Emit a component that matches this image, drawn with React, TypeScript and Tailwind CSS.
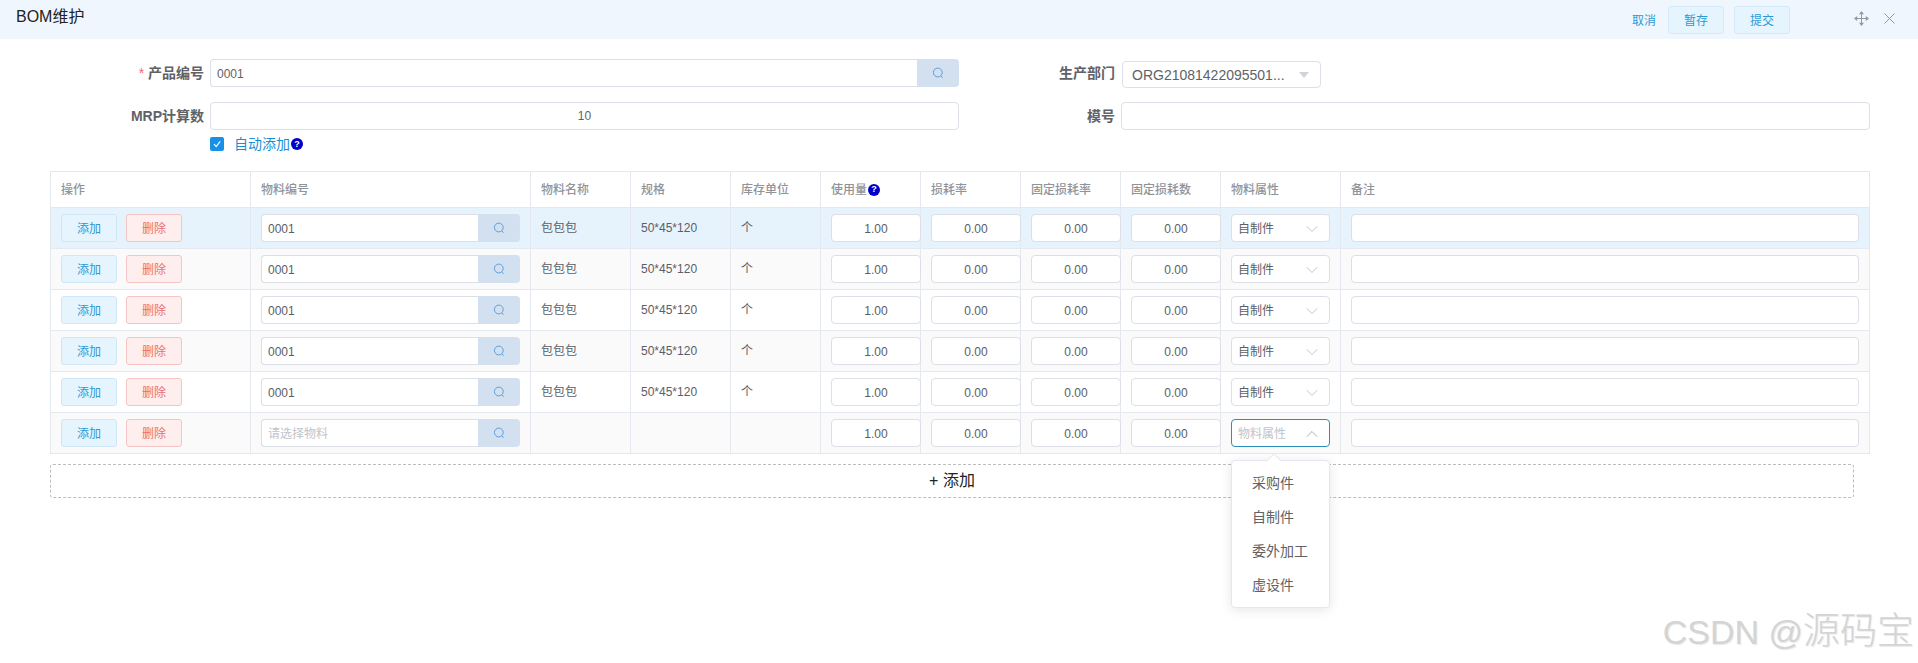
import { ChevronDown, ChevronUp } from "lucide-react";

const FONT = "font-['Liberation_Sans','Noto_Sans_CJK_SC',sans-serif]";

function IconSearch() {
  return (
    <svg width="12" height="12" viewBox="0 0 12 12" fill="none" stroke="#5a9fe0" strokeWidth="1">
      <circle cx="5.8" cy="5.5" r="4.4" />
      <path d="M8.8 8.8 L10.6 10.8" />
    </svg>
  );
}

function IconMove() {
  return (
    <svg width="15" height="15" viewBox="0 0 15 15" fill="#8f98a3" stroke="#8f98a3" strokeWidth="1">
      <path d="M7.5 2 V13 M2 7.5 H13" fill="none" />
      <path d="M7.5 0 L10 3.2 H5 Z M7.5 15 L10 11.8 H5 Z M0 7.5 L3.2 5 V10 Z M15 7.5 L11.8 5 V10 Z" stroke="none" />
    </svg>
  );
}

function IconClose() {
  return (
    <svg width="11" height="11" viewBox="0 0 11 11" fill="none" stroke="#8f98a3" strokeWidth="1">
      <path d="M0.5 0.5 L10.5 10.5 M10.5 0.5 L0.5 10.5" />
    </svg>
  );
}

function Help() {
  return (
    <span className="ml-px inline-flex h-3 w-3 shrink-0 items-center justify-center rounded-full bg-[#0000c8] text-[9px] leading-none font-bold text-white">
      ?
    </span>
  );
}

function ToolButton({ label }: { label: string }) {
  return (
    <button className="h-7 w-14 rounded-[3px] border border-[#d3e8f8] bg-[#e6f4fe] pt-[2px] text-xs text-[#2b9ad6]">
      {label}
    </button>
  );
}

function SearchInput({ value, placeholder }: { value?: string; placeholder?: string }) {
  return (
    <div className="flex h-7 w-[259px] overflow-hidden rounded-[4px] bg-[#d3e0f0]">
      <input
        readOnly
        value={value ?? ""}
        placeholder={placeholder}
        className="h-full min-w-0 flex-1 rounded-l-[4px] border border-r-0 border-[#dcdfe6] bg-white px-[6px] pt-[2px] text-xs text-[#5a5e66] outline-none placeholder:text-[#c0c4cc]"
      />
      <span className="flex w-[42px] shrink-0 items-center justify-center">
        <IconSearch />
      </span>
    </div>
  );
}

function NumberInput({ value }: { value: string }) {
  return (
    <input
      readOnly
      value={value}
      className="h-7 w-[90px] rounded-[4px] border border-[#dcdfe6] bg-white pt-[2px] text-center text-xs text-[#5a5e66] outline-none"
    />
  );
}

function AttrSelect() {
  return (
    <div className="flex h-7 w-[99px] items-center justify-between rounded-[4px] border border-[#dcdfe6] bg-white pt-[2px] pr-[7px] pl-[6px] text-xs text-[#5a5e66]">
      自制件
      <ChevronDown size={20} strokeWidth={1} color="#b4b9c2" />
    </div>
  );
}

function OpenSelect() {
  const options = ["采购件", "自制件", "委外加工", "虚设件"];

  return (
    <div className="relative">
      <div className="flex h-7 w-[99px] items-center justify-between rounded-[4px] border border-[#2b8fbd] bg-white pt-[2px] pr-[7px] pl-[6px] text-xs text-[#c0c4cc]">
        物料属性
        <ChevronUp size={20} strokeWidth={1} color="#9aa0aa" />
      </div>
      <div className="absolute top-[41px] left-0 z-20 w-[99px] rounded-[4px] border border-[#e4e7ed] bg-white py-[5px] text-sm text-[#606266] shadow-[0_2px_12px_rgba(0,0,0,0.1)]">
        <span className="absolute -top-[6px] left-[37px] h-[10px] w-[10px] rotate-45 border-t border-l border-[#e4e7ed] bg-white" />
        {options.map((o) => (
          <div key={o} className="flex h-[34px] items-center pl-[20px] whitespace-nowrap">
            {o}
          </div>
        ))}
      </div>
    </div>
  );
}

const rows = [
  { bg: "bg-[#e6f3fd]" },
  { bg: "bg-[#fafafa]" },
  { bg: "bg-white" },
  { bg: "bg-[#fafafa]" },
  { bg: "bg-white" },
  { bg: "bg-[#fafafa]", empty: true },
];

const thClass = "h-9 border border-[#e3e9ee] pl-[10px] text-left text-xs font-medium text-[#909399]";
const tdClass = "h-[41px] border border-[#e3e9ee] pl-[10px] text-xs text-[#5a5e66]";

export default function App() {
  return (
    <div className={`relative h-[663px] overflow-hidden bg-white ${FONT}`}>
      <header className="flex h-[39px] items-center bg-[#f0f6fe] pr-[23px] pl-4">
        <h1 className="-mt-[5px] text-base text-[#222]">BOM维护</h1>
        <div className="ml-auto flex items-center gap-[10px]">
          <span className="mt-[2px] mr-[2px] text-xs text-[#2b9ad6]">取消</span>
          <ToolButton label="暂存" />
          <ToolButton label="提交" />
        </div>
        <div className="-mt-[3px] ml-[64px] flex items-center gap-[15px]">
          <IconMove />
          <IconClose />
        </div>
      </header>

      <section className="pt-5">
        <div className="flex items-start">
          <label className="mt-[4px] mr-[6px] w-[204px] text-right text-sm font-bold text-[#606266]">
            <span className="font-normal text-[#f56c6c]">* </span>产品编号
          </label>
          <div className="flex h-7 w-[749px] overflow-hidden rounded-[4px] bg-[#d3e0f0]">
            <input
              readOnly
              value="0001"
              className="h-full min-w-0 flex-1 rounded-l-[4px] border border-r-0 border-[#dcdfe6] bg-white px-[6px] pt-[2px] text-xs text-[#606266] outline-none"
            />
            <span className="flex w-[42px] shrink-0 items-center justify-center">
              <IconSearch />
            </span>
          </div>
          <label className="mt-[4px] mr-[7px] w-[156px] text-right text-sm font-bold text-[#606266]">生产部门</label>
          <div className="mt-[2px] flex h-[27px] w-[199px] items-center justify-between rounded-[4px] border border-[#dcdfe6] bg-white pr-[11px] pl-[9px] text-sm text-[#606266]">
            ORG21081422095501...
            <span className="h-0 w-0 border-x-[5px] border-t-[6px] border-x-transparent border-t-[#d0d3d9]" />
          </div>
        </div>

        <div className="mt-[14px] flex items-start">
          <label className="mt-[4px] mr-[6px] w-[204px] text-right text-sm font-bold text-[#606266]">MRP计算数</label>
          <input
            readOnly
            value="10"
            className="h-7 w-[749px] rounded-[4px] border border-[#dcdfe6] bg-white text-center text-xs text-[#606266] outline-none"
          />
          <label className="mt-[4px] mr-[6px] w-[156px] text-right text-sm font-bold text-[#606266]">模号</label>
          <input
            readOnly
            className="h-7 w-[749px] rounded-[4px] border border-[#dcdfe6] bg-white outline-none"
          />
        </div>

        <div className="mt-[7px] ml-[210px] flex h-[14px] items-center">
          <span className="flex h-[14px] w-[14px] items-center justify-center rounded-[2px] bg-[#1890e8]">
            <svg width="10" height="10" viewBox="0 0 10 10" fill="none" stroke="white" strokeWidth="1.2">
              <path d="M2 5.2 L4.2 7.6 L8.2 2.4" />
            </svg>
          </span>
          <span className="ml-[10px] text-sm text-[#1a8fd0]">自动添加</span>
          <Help />
        </div>
      </section>

      <section className="mt-5 mr-[48px] ml-[50px]">
        <table className="w-full table-fixed border-collapse">
          <thead>
            <tr>
              <th className={`${thClass} w-[200px]`}>操作</th>
              <th className={`${thClass} w-[280px]`}>物料编号</th>
              <th className={`${thClass} w-[100px]`}>物料名称</th>
              <th className={`${thClass} w-[100px]`}>规格</th>
              <th className={`${thClass} w-[90px]`}>库存单位</th>
              <th className={`${thClass} w-[100px]`}>
                <span className="flex items-center">
                  使用量
                  <Help />
                </span>
              </th>
              <th className={`${thClass} w-[100px]`}>损耗率</th>
              <th className={`${thClass} w-[100px]`}>固定损耗率</th>
              <th className={`${thClass} w-[100px]`}>固定损耗数</th>
              <th className={`${thClass} w-[120px]`}>物料属性</th>
              <th className={thClass}>备注</th>
            </tr>
          </thead>
          <tbody>
            {rows.map((row, i) => (
              <tr key={i} className={row.bg}>
                <td className={tdClass}>
                  <div className="flex gap-[9px]">
                    <button className="h-7 w-14 rounded-[3px] border border-[#cfe6f7] bg-[#e6f4fd] pt-[2px] text-xs text-[#2b9ad6]">
                      添加
                    </button>
                    <button className="h-7 w-14 rounded-[3px] border border-[#f5c4c4] bg-[#feeeee] pt-[2px] text-xs text-[#ec6f6f]">
                      删除
                    </button>
                  </div>
                </td>
                <td className={tdClass}>
                  {row.empty ? <SearchInput placeholder="请选择物料" /> : <SearchInput value="0001" />}
                </td>
                <td className={tdClass}>{row.empty ? "" : "包包包"}</td>
                <td className={tdClass}>{row.empty ? "" : "50*45*120"}</td>
                <td className={tdClass}>{row.empty ? "" : "个"}</td>
                <td className={tdClass}>
                  <NumberInput value="1.00" />
                </td>
                <td className={tdClass}>
                  <NumberInput value="0.00" />
                </td>
                <td className={tdClass}>
                  <NumberInput value="0.00" />
                </td>
                <td className={tdClass}>
                  <NumberInput value="0.00" />
                </td>
                <td className={tdClass}>{row.empty ? <OpenSelect /> : <AttrSelect />}</td>
                <td className={tdClass}>
                  <input
                    readOnly
                    className="h-7 w-[508px] rounded-[4px] border border-[#dcdfe6] bg-white outline-none"
                  />
                </td>
              </tr>
            ))}
          </tbody>
        </table>

        <button className="mt-[10px] h-[34px] w-[1804px] rounded-[3px] border border-dashed border-[#bdbdbd] bg-white text-base text-[#222]">
          + 添加
        </button>
      </section>

      <div className="pointer-events-none absolute right-[4px] bottom-[13px] text-[34px] leading-none font-light text-[#d4d4d4] [text-shadow:1px_1px_1px_#e8e8e8]">
        CSDN @<span className="text-[37px]">源码宝</span>
      </div>
    </div>
  );
}
